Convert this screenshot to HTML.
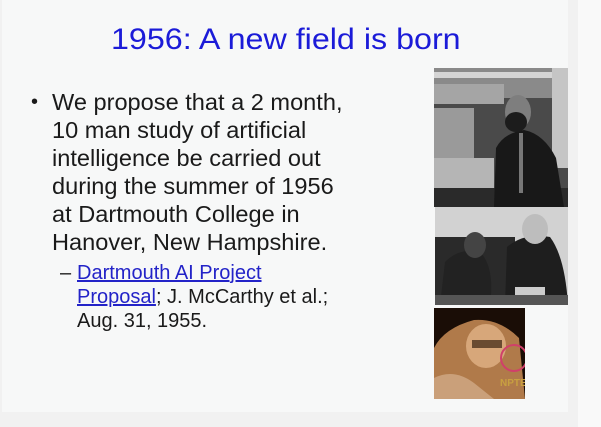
<!DOCTYPE html>
<html><head><meta charset="utf-8"><style>
html,body{margin:0;padding:0;}
body{width:601px;height:427px;background:#f1f1f1;position:relative;overflow:hidden;font-family:"Liberation Sans",sans-serif;}
#right{position:absolute;left:578px;top:0;width:23px;height:427px;background:#f9f9f9;}
#slide{position:absolute;left:2px;top:0;width:566px;height:412px;background:#f7f8f8;}
.t{position:absolute;white-space:nowrap;transform-origin:0 0;}
.title{left:111px;top:23px;font-size:30px;color:#1b1bd8;transform:scaleX(1.075);}
.b{left:52px;font-size:23px;color:#1a1a1a;transform:scaleX(1.025);}
.s{left:77px;font-size:20px;color:#1a1a1a;transform:scaleX(1.0);}
a{color:#2323c8;text-decoration:underline;}
.ph{position:absolute;overflow:hidden;}
</style></head><body>
<div id="right"></div>
<div id="slide"></div>
<div class="t title">1956: A new field is born</div>
<div class="t" style="left:31px;top:91px;font-size:20px;color:#1a1a1a">•</div>
<div class="t b" style="top:89px">We propose that a 2 month,</div>
<div class="t b" style="top:117px">10 man study of artificial</div>
<div class="t b" style="top:145px">intelligence be carried out</div>
<div class="t b" style="top:173px">during the summer of 1956</div>
<div class="t b" style="top:201px">at Dartmouth College in</div>
<div class="t b" style="top:229px">Hanover, New Hampshire.</div>
<div class="t" style="left:60px;top:262px;font-size:20px;color:#1a1a1a">–</div>
<div class="t s" style="top:262px"><a>Dartmouth AI Project</a></div>
<div class="t s" style="top:286px"><a>Proposal</a>; J. McCarthy et al.;</div>
<div class="t s" style="top:310px">Aug. 31, 1955.</div>

<div class="ph" style="left:434px;top:68px;width:134px;height:139px;background:#4a4a4a">
<svg width="134" height="139">
<rect x="0" y="0" width="134" height="30" fill="#8a8a8a"/>
<rect x="0" y="4" width="134" height="6" fill="#d5d5d5"/>
<rect x="0" y="16" width="70" height="20" fill="#a5a5a5"/>
<rect x="0" y="40" width="40" height="50" fill="#9a9a9a"/>
<rect x="0" y="90" width="60" height="30" fill="#b5b5b5"/>
<rect x="0" y="120" width="134" height="19" fill="#2a2a2a"/>
<rect x="118" y="0" width="16" height="100" fill="#c5c5c5"/>
<path d="M60 139 L62 80 Q70 65 90 62 Q110 66 122 90 L130 139Z" fill="#181818"/>
<ellipse cx="84" cy="44" rx="13" ry="17" fill="#7e7e7e"/>
<ellipse cx="82" cy="54" rx="11" ry="10" fill="#1c1c1c"/>
<rect x="85" y="65" width="4" height="60" fill="#777"/>
</svg></div>

<div class="ph" style="left:435px;top:207px;width:133px;height:98px;background:#d2d2d2">
<svg width="133" height="98">
<rect x="0" y="30" width="80" height="60" fill="#2a2a2a"/>
<path d="M5 98 L10 55 Q25 40 45 45 Q60 60 55 98Z" fill="#222"/>
<ellipse cx="40" cy="38" rx="11" ry="13" fill="#444"/>
<path d="M70 98 L72 40 Q90 25 115 30 Q130 50 133 98Z" fill="#1e1e1e"/>
<ellipse cx="100" cy="22" rx="13" ry="15" fill="#bdbdbd"/>
<rect x="0" y="88" width="133" height="10" fill="#555"/>
<rect x="80" y="80" width="30" height="8" fill="#ccc"/>
</svg></div>

<div class="ph" style="left:434px;top:308px;width:91px;height:91px;background:#1a0d06">
<svg width="91" height="91">
<path d="M0 40 Q10 20 40 12 Q65 10 85 30 L91 91 L0 91Z" fill="#b07a4a"/>
<ellipse cx="52" cy="38" rx="20" ry="22" fill="#d7a77a"/>
<rect x="38" y="32" width="30" height="8" fill="#3a2412" opacity="0.7"/>
<path d="M0 70 Q20 60 40 75 L60 91 L0 91Z" fill="#caa07a"/>
<circle cx="80" cy="50" r="13" fill="none" stroke="#d0406a" stroke-width="2"/>
<text x="66" y="78" font-size="10" font-weight="bold" fill="#c8a040" font-family="Liberation Sans">NPTEL</text>
</svg></div>
</body></html>
